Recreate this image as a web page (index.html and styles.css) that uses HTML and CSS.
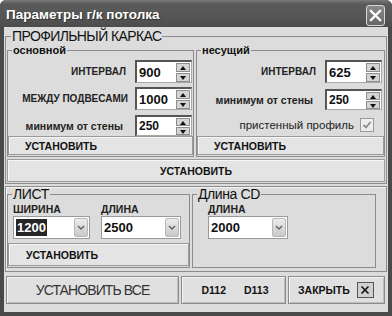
FILE: index.html
```html
<!DOCTYPE html>
<html>
<head>
    <title>Параметры г/к потолка</title>
    <link rel="stylesheet" href="styles.css">
</head>
<body>
    <div class="window">
        <div class="titlebar">
            <span class="title">Параметры г/к потолка</span>
            <span class="close-btn">
                <svg width="13" height="13" viewBox="0 0 13 13"><path d="M2 2 L11 11 M11 2 L2 11" stroke="#fff" stroke-width="2.4" stroke-linecap="square"/></svg>
            </span>
        </div>
        <div class="client">
            <fieldset class="main">
                <legend>ПРОФИЛЬНЫЙ КАРКАС</legend>
                <div class="cols">
                    <fieldset class="sub left">
                        <legend>основной</legend>
                        <div class="row r1">
                            <label class="cap">ИНТЕРВАЛ</label>
                            <div class="spin"><span class="val">900</span><span class="arrows"><i class="up"></i><i class="down"></i></span></div>
                        </div>
                        <div class="row r2">
                            <label class="cap tight">МЕЖДУ ПОДВЕСАМИ</label>
                            <div class="spin"><span class="val">1000</span><span class="arrows"><i class="up"></i><i class="down"></i></span></div>
                        </div>
                        <div class="row r3">
                            <label class="low">минимум от стены</label>
                            <div class="spin small"><span class="val">250</span><span class="arrows"><i class="up"></i><i class="down"></i></span></div>
                        </div>
                        <button class="btn sub-btn">УСТАНОВИТЬ</button>
                    </fieldset>
                    <fieldset class="sub right">
                        <legend>несущий</legend>
                        <div class="row r1">
                            <label class="cap">ИНТЕРВАЛ</label>
                            <div class="spin"><span class="val">625</span><span class="arrows"><i class="up"></i><i class="down"></i></span></div>
                        </div>
                        <div class="row r2b">
                            <label class="low">минимум от стены</label>
                            <div class="spin small"><span class="val">250</span><span class="arrows"><i class="up"></i><i class="down"></i></span></div>
                        </div>
                        <div class="row rcheck">
                            <label class="plain">пристенный профиль</label>
                            <span class="check">
                                <svg width="12" height="12" viewBox="0 0 12 12"><path d="M2.5 6 L5 8.5 L9.5 3" fill="none" stroke="#8a8a8a" stroke-width="1.8"/></svg>
                            </span>
                        </div>
                        <button class="btn sub-btn">УСТАНОВИТЬ</button>
                    </fieldset>
                </div>
                <button class="btn wide-btn">УСТАНОВИТЬ</button>
            </fieldset>

            <div class="lower">
                <fieldset class="sheet">
                    <legend>ЛИСТ</legend>
                    <div class="combos">
                        <div class="field w1">
                            <span class="cap">ШИРИНА</span>
                            <div class="combo"><span class="val"><span class="sel">1200</span></span><span class="drop"><svg width="8" height="6" viewBox="0 0 8 6"><path d="M1 1 L4 4 L7 1" fill="none" stroke="#666" stroke-width="1.5"/></svg></span></div>
                        </div>
                        <div class="field w2">
                            <span class="cap">ДЛИНА</span>
                            <div class="combo"><span class="val">2500</span><span class="drop"><svg width="8" height="6" viewBox="0 0 8 6"><path d="M1 1 L4 4 L7 1" fill="none" stroke="#666" stroke-width="1.5"/></svg></span></div>
                        </div>
                    </div>
                    <button class="btn sheet-btn">УСТАНОВИТЬ</button>
                </fieldset>
                <fieldset class="cd">
                    <legend>Длина CD</legend>
                    <div class="field w2">
                        <span class="cap">ДЛИНА</span>
                        <div class="combo"><span class="val">2000</span><span class="drop"><svg width="8" height="6" viewBox="0 0 8 6"><path d="M1 1 L4 4 L7 1" fill="none" stroke="#666" stroke-width="1.5"/></svg></span></div>
                    </div>
                </fieldset>
            </div>

            <div class="bottombar">
                <button class="bb all">УСТАНОВИТЬ ВСЕ</button>
                <div class="bb profiles"><span>D112</span><span>D113</span></div>
                <div class="bb closing">
                    <span>ЗАКРЫТЬ</span>
                    <span class="xbtn"><svg width="10" height="10" viewBox="0 0 10 10"><path d="M1.5 1.5 L8.5 8.5 M8.5 1.5 L1.5 8.5" stroke="#111" stroke-width="1.6"/></svg></span>
                </div>
            </div>
        </div>
    </div>
</body>
</html>
```

FILE: styles.css
```css
* {
    box-sizing: border-box;
}

body {
    margin: 0;
    background: #fff;
    font-family: "Liberation Sans", Arial, sans-serif;
    color: #111;
}

.window {
    width: 392px;
    height: 316px;
    background: #4a4a4a;
    border-radius: 6px 6px 0 0;
    display: flex;
    flex-direction: column;
}

.titlebar {
    height: 27px;
    display: flex;
    align-items: center;
    justify-content: space-between;
    padding: 0 7px 0 6px;
    background: linear-gradient(#7a7a7a, #5a5a5a 15%, #545454 70%, #4c4c4c);
    border-radius: 6px 6px 0 0;
}

.title {
    color: #fff;
    font-size: 13.5px;
    font-weight: bold;
    text-shadow: 1px 1px 0 #333;
    margin-top: 2px;
}

.close-btn {
    width: 19px;
    height: 21px;
    margin-top: 4px;
    border: 1px solid #d8d8d8;
    border-radius: 3px;
    background: linear-gradient(#8a8a8a, #666);
    display: flex;
    align-items: center;
    justify-content: center;
}

.client {
    height: 285px;
    margin: 0 4px;
    background: #dcdcdc;
    display: flex;
    flex-direction: column;
}

fieldset {
    margin: 0;
    padding: 0;
    min-width: 0;
    border: 1px solid #8c8c8c;
}

legend {
    padding: 0 1px;
}

/* profile frame */

.main {
    width: 382px;
    margin: 2px 0 0 1px;
    padding: 0 1px 1px;
}

.main > legend {
    margin-left: 4px;
    font-size: 14px;
    line-height: 15px;
    letter-spacing: -0.6px;
}

.cols {
    display: flex;
    gap: 2px;
}

.sub {
    display: flex;
    flex-direction: column;
    padding: 0 0 1px;
}

.sub.left {
    width: 187px;
}

.sub.right {
    width: 189px;
}

.sub > legend {
    margin-left: 4px;
    font-size: 11px;
    font-weight: bold;
    line-height: 12px;
}

.row {
    display: flex;
    align-items: center;
    justify-content: flex-end;
}

.left .row {
    padding-right: 1px;
}

.right .row {
    padding-right: 2px;
}

.r1 { margin-top: 4px; }
.r2 { margin-top: 4px; }
.r3 { margin-top: 5px; }
.r2b { margin-top: 6px; }
.rcheck { margin-top: 7px; height: 16px; padding-right: 10px !important; }

.cap {
    font-size: 10px;
    font-weight: bold;
    color: #222;
}

.row .cap {
    margin-right: 9px;
}

.row .tight {
    margin-right: 7px;
}

.low {
    font-size: 10.5px;
    font-weight: bold;
    color: #222;
    margin-right: 12px;
}

.plain {
    font-size: 11.5px;
    color: #222;
    margin-right: 6px;
}

.check {
    width: 14px;
    height: 14px;
    border: 1px solid #9a9a9a;
    background: #ededed;
    display: flex;
    align-items: center;
    justify-content: center;
}

.spin {
    width: 57px;
    height: 23px;
    background: #fff;
    border-style: solid;
    border-width: 2px 1px 1px 2px;
    border-color: #555 #a8a8a8 #a8a8a8 #555;
    display: flex;
    align-items: center;
    justify-content: space-between;
    padding: 0 1px 0 2px;
}

.spin.small {
    height: 21px;
}

.val {
    font-size: 13px;
    font-weight: bold;
    color: #111;
}

.small .val {
    font-size: 12px;
}

.arrows {
    display: flex;
    flex-direction: column;
    gap: 1px;
}

.arrows i {
    display: block;
    width: 14px;
    height: 9px;
    background: #d4d4d4;
    border: 1px solid #8e8e8e;
    position: relative;
}

.small .arrows i {
    height: 8px;
}

.arrows i::after {
    content: "";
    position: absolute;
    left: 3px;
    border-left: 3.5px solid transparent;
    border-right: 3.5px solid transparent;
}

.arrows .up::after {
    top: 2px;
    border-bottom: 4px solid #111;
}

.arrows .down::after {
    top: 2px;
    border-top: 4px solid #111;
}

.btn {
    font-family: "Liberation Sans", Arial, sans-serif;
    font-weight: bold;
    font-size: 10.5px;
    color: #111;
    background: #e4e4e4;
    border: 1px solid #9a9a9a;
    box-shadow: inset 1px 1px 0 #f6f6f6;
    cursor: pointer;
    padding: 0;
}

.sub-btn {
    margin-top: auto;
    height: 19px;
    text-align: left;
    padding-left: 16px;
}

.wide-btn {
    margin-top: 2px;
    height: 23px;
    width: 100%;
}

/* sheet and CD */

.lower {
    width: 382px;
    height: 86px;
    margin: 2px 0 0 1px;
    border: 1px solid #8c8c8c;
    box-shadow: inset 1px 1px 0 #f2f2f2;
    display: flex;
    align-items: flex-start;
}

.lower legend {
    margin-left: 4px;
    font-size: 14px;
    line-height: 15px;
    letter-spacing: -0.4px;
}

.sheet {
    width: 183px;
    height: 81px;
    margin-left: 1px;
    display: flex;
    flex-direction: column;
}

.cd {
    width: 184px;
    height: 81px;
    margin-left: 2px;
    padding: 0 0 0 15px;
}

.cd > legend {
    margin-left: -11px;
}

.combos {
    display: flex;
    gap: 11px;
    padding-left: 5px;
}

.field {
    display: flex;
    flex-direction: column;
}

.field .cap {
    height: 12px;
    line-height: 12px;
    margin: 1px 0 1px;
    font-size: 10.5px;
}

.w1 { width: 77px; }
.w2 { width: 80px; }

.combo {
    height: 23px;
    background: #fff;
    border: 1px solid #9a9a9a;
    display: flex;
    align-items: center;
    justify-content: space-between;
    padding: 0 1px 0 1px;
}

.combo .val {
    font-size: 13px;
    padding-left: 1px;
}

.sel {
    background: #262626;
    color: #fff;
    padding: 1px 1px;
}

.drop {
    width: 14px;
    height: 19px;
    border: 1px solid #b8b8b8;
    border-radius: 2px;
    background: linear-gradient(#ececec, #c9c9c9);
    display: flex;
    align-items: center;
    justify-content: center;
}

.sheet-btn {
    margin-top: 4px;
    height: 23px;
    text-align: left;
    padding-left: 17px;
}

/* bottom bar */

.bottombar {
    display: flex;
    gap: 2px;
    margin-top: 4px;
    padding-left: 2px;
    height: 28px;
}

.bb {
    height: 28px;
    border: 1px solid #8c8c8c;
    box-shadow: inset 1px 1px 0 #f4f4f4, inset -1px -1px 0 #bdbdbd;
    background: #e0e0e0;
    display: flex;
    align-items: center;
}

.all {
    width: 173px;
    justify-content: center;
    font-family: "Liberation Sans", Arial, sans-serif;
    font-size: 14px;
    letter-spacing: -0.9px;
    color: #333;
    cursor: pointer;
    padding: 0;
}

.profiles {
    width: 105px;
    justify-content: center;
    gap: 18px;
    font-size: 10.5px;
    font-weight: bold;
    padding-left: 3px;
}

.closing {
    width: 97px;
    padding-left: 9px;
    font-size: 10.5px;
    font-weight: bold;
    gap: 7px;
}

.xbtn {
    width: 17px;
    height: 16px;
    border: 1px solid #555;
    background: #d0d0d0;
    display: flex;
    align-items: center;
    justify-content: center;
}
```
